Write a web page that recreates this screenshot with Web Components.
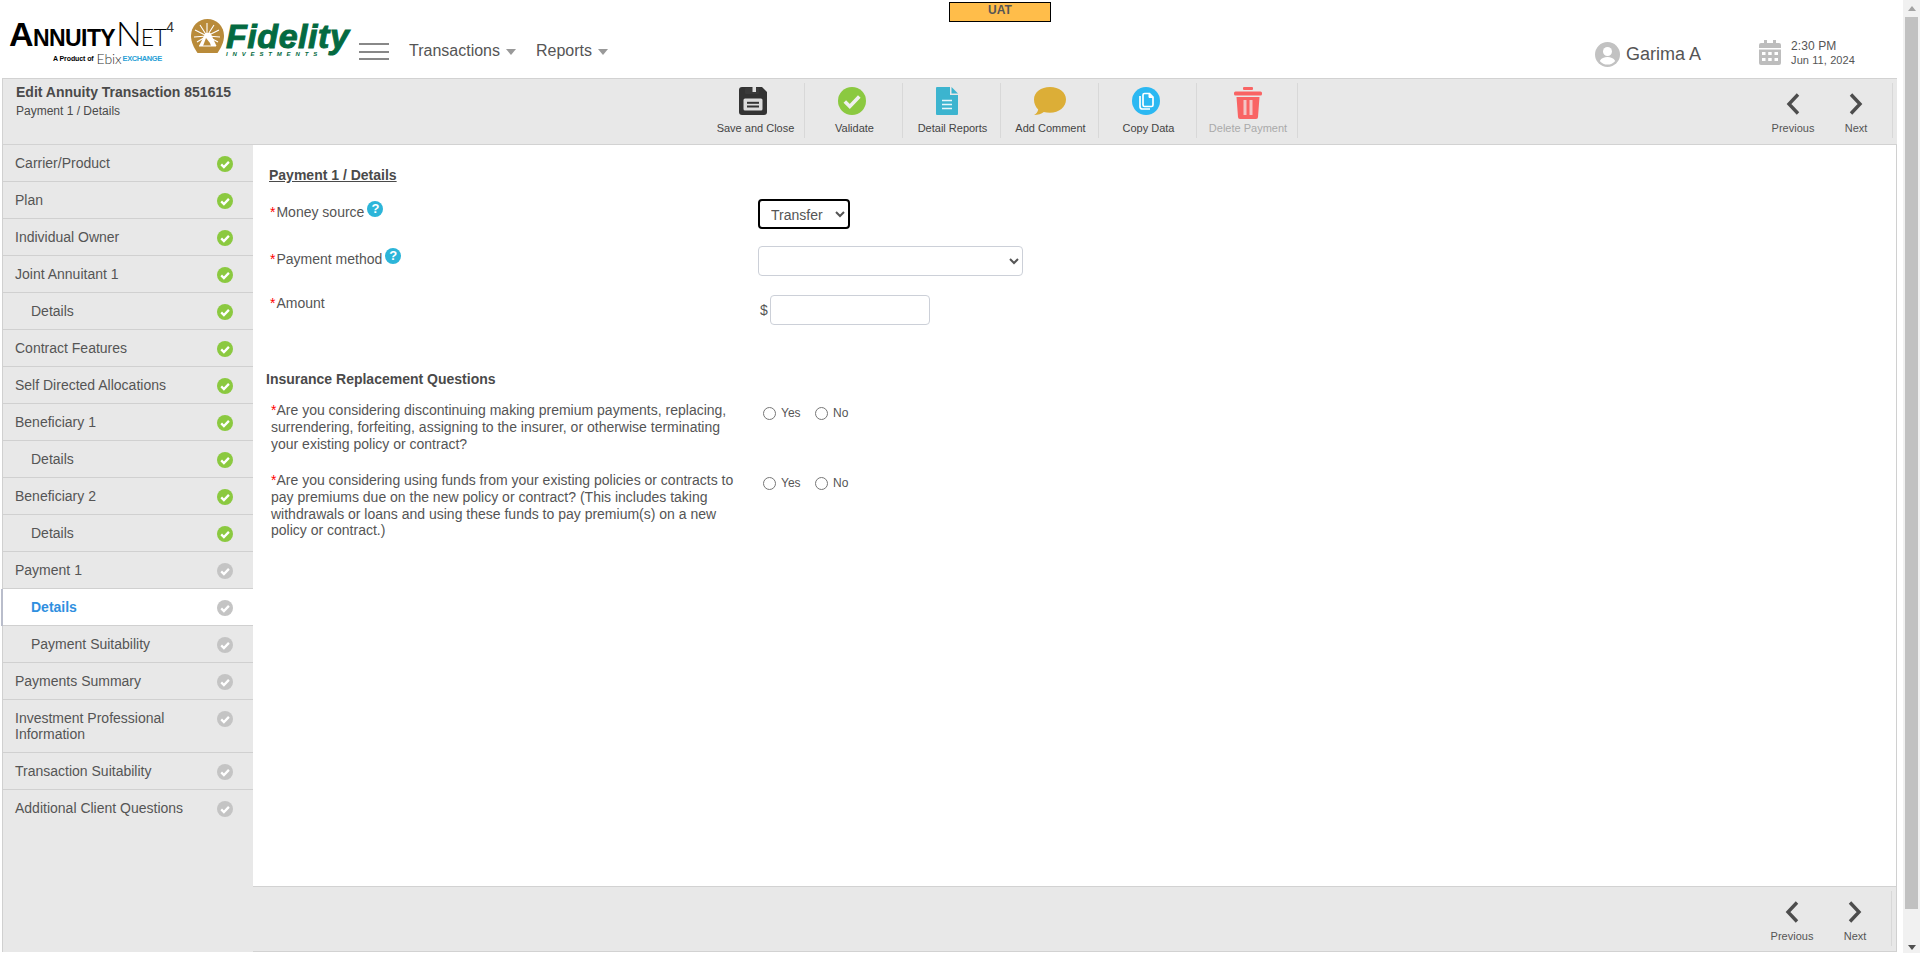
<!DOCTYPE html>
<html lang="en"><head><meta charset="utf-8"><title>Edit Annuity Transaction</title>
<style>
html,body{margin:0;padding:0;height:953px;overflow:hidden;background:#fff;font-family:"Liberation Sans",Arial,sans-serif;color:#555}
</style></head>
<body>
<an-app></an-app>
<script>
function def(name, html, extra){
  const t=document.createElement('template');t.innerHTML=html;
  customElements.define(name,class extends HTMLElement{
    constructor(){super();this.attachShadow({mode:'open'}).appendChild(t.content.cloneNode(true));}
    connectedCallback(){if(extra)extra(this);}
  });
}
const CHK='<path d="M4.2 8.4l2.7 2.7 5-5.2" fill="none" stroke="#fff" stroke-width="2.3"/>';

def('an-annuity-logo',`<style>
:host{display:flex;flex-direction:column;width:163px;height:46px;color:#000;font-family:"Liberation Sans",Arial,sans-serif;white-space:nowrap}
.top{display:flex;align-items:baseline;height:27px;line-height:27px}
.a{font:700 34px/27px "Liberation Sans";letter-spacing:-.5px}
.n{font:700 23px/27px "Liberation Sans";letter-spacing:-.6px}
.t{font:300 34px/27px Lato,"Liberation Sans";margin-left:1px;letter-spacing:-1px}
.e{font:300 23px/27px Lato,"Liberation Sans";letter-spacing:-.6px}
.f{font:400 14px/27px "Liberation Sans";align-self:flex-start;color:#333;margin:-5px 0 0 0}
.sub{display:flex;align-items:center;margin:9px 0 0 44px;height:8px;font:700 7px/8px "Liberation Sans";letter-spacing:-.1px}
.eb{font:300 14px/8px Lato,"Liberation Sans";color:#333;margin:0 1px 0 3px}
.x{color:#2a9fd6;font-size:7.5px;letter-spacing:-.4px}
</style><div class="top"><span class="a">A</span><span class="n">NNUITY</span><span class="t">N</span><span class="e">ET</span><span class="f">4</span></div>
<div class="sub"><span>A Product of</span><span class="eb">Ebix</span><span class="x">EXCHANGE</span></div>`);

def('an-fidelity-logo',`<style>
:host{display:flex;width:159px;height:36px;white-space:nowrap}
.w{display:flex;flex-direction:column;margin-left:2px;color:#046a41}
.f{font:italic 700 34px/28px "Liberation Sans";-webkit-text-stroke:1px #046a41;letter-spacing:.55px;height:28px;margin-top:3px}
.i{font:italic 700 6px/6px "Liberation Sans";letter-spacing:4.85px;margin-top:1px}
svg{flex:none}
</style><svg width="33" height="34" viewBox="0 0 33 34"><path d="M0 16.5a16.5 16.5 0 0 1 33 0c0 7-3 12-6.5 17.5H6.500C3 28.500 0 23.500 0 16.500Z" fill="#b98b3a"/>
<g stroke="#fff" stroke-width="1.100"><path d="M16 17 L16 4M16 17 L9 6M16 17 L23 6M16 17 L4 11M16 17 L28 11M16 17 L3 18M16 17 L29 18M16 17L6 23M16 17L27 23"/></g>
<path d="M14.500 14l5 0 6 13H8Z" fill="#fff"/><path d="M15 19l-3 8h8l-1-3Z" fill="#b98b3a"/><path d="M8 27h17" stroke="#fff" stroke-width="1"/></svg>
<div class="w"><div class="f">Fidelity</div><div class="i">INVESTMENTS</div></div>`);

def('an-hamburger',`<style>:host{display:flex;flex-direction:column;gap:5.400px;width:30px}i{display:block;height:2.200px;background:#888}</style><i></i><i></i><i></i>`);

def('an-menu',`<style>:host{display:inline-flex;align-items:center;font:16px/20px "Liberation Sans";color:#555}
i{display:block;width:0;height:0;border:5.500px solid transparent;border-top:6px solid #999;border-bottom:0;margin:2px 0 0 6px}</style><slot></slot><i></i>`);

def('an-uat',`<style>:host{display:block;box-sizing:border-box;width:102px;height:20px;background:#ffbd4a;border:1px solid #000;text-align:center;font:700 12px/14px "Liberation Sans";color:#555}</style><slot></slot>`);

def('an-user',`<style>:host{display:flex;align-items:center;gap:6px;font:18px/25px "Liberation Sans";color:#555;white-space:nowrap}svg{display:block}</style>
<svg width="25" height="25" viewBox="0 0 25 25"><circle cx="12.500" cy="12.500" r="12.500" fill="#c2c2c2"/><circle cx="12.500" cy="9.500" r="4.500" fill="#fff"/><path d="M4.800 19c1.500-3 4.500-4 7.700-4s6.200 1 7.700 4a10 10 0 0 1-15.400 0Z" fill="#fff"/></svg><slot></slot>`);

def('an-clock',`<style>:host{display:flex;gap:10px;color:#555}svg{display:block}
.c{display:flex;flex-direction:column;margin-top:-1px}.a{font:12px/15px "Liberation Sans";letter-spacing:.1px}.b{font:11px/13px "Liberation Sans";letter-spacing:.1px}</style>
<svg width="22" height="25" viewBox="0 0 22 25"><path d="M2 3h3V0h3v3h6V0h3v3h3a2 2 0 0 1 2 2v3H0V5a2 2 0 0 1 2-2Z" fill="#bdbdbd"/><path d="M0 9.500h22V23a2 2 0 0 1-2 2H2a2 2 0 0 1-2-2Z" fill="#bdbdbd"/>
<g fill="#fff"><rect x="3" y="12" width="3.500" height="3"/><rect x="9.200" y="12" width="3.500" height="3"/><rect x="15.500" y="12" width="3.500" height="3"/><rect x="3" y="18" width="3.500" height="3"/><rect x="9.200" y="18" width="3.500" height="3"/><rect x="15.500" y="18" width="3.500" height="3"/></g></svg>
<div class="c"><span class="a">2:30 PM</span><span class="b">Jun 11, 2024</span></div>`);

def('an-header',`<style>
:host{display:flex;align-items:flex-start;height:78px;flex:none}
an-annuity-logo{margin:19px 1px 0 9px}
an-fidelity-logo{margin:19px 0 0 18px}
an-hamburger{margin:43px 0 0 9px}
nav{display:flex;gap:20px;margin:41px 0 0 20px;width:199px;white-space:nowrap}
an-uat{margin:2px 0 0 341px}
an-user{margin:42px 0 0 544px}
an-clock{margin:40px 0 0 0}
.sp{width:58px;flex:none;margin:0}
</style>
<an-annuity-logo></an-annuity-logo><an-fidelity-logo></an-fidelity-logo><an-hamburger></an-hamburger>
<nav><an-menu>Transactions</an-menu><an-menu>Reports</an-menu></nav>
<an-uat>UAT</an-uat><an-user>Garima A</an-user><span class="sp"></span><an-clock></an-clock>`);

def('an-tool',`<style>
:host{display:flex;flex-direction:column;align-items:center;box-sizing:border-box;width:98px;height:55px;padding-top:4px;font:11px/14px "Liberation Sans";color:#444;white-space:nowrap;flex:none}
:host([sep]){border-right:1px solid #d8d8d8}
:host([off]){color:#aaa}
:host([nav]){width:63px;color:#555}
.i{height:32px;margin-bottom:2px;display:flex;justify-content:center}
</style><div class="i"><slot name="icon"></slot></div><slot></slot>`);

def('an-prev-next',`<style>:host{display:flex;margin-left:auto;align-self:flex-start;margin-top:4px}
.e{width:4.500px;border-right:1px solid #d8d8d8;height:55px}.r{width:4px}
svg{display:block;margin-top:6px}</style>
<an-tool nav><svg slot="icon" width="14" height="22" viewBox="0 0 14 22"><path d="M12 1.500 3 11l9 9.500" fill="none" stroke="#4d4d4d" stroke-width="3.400"/></svg>Previous</an-tool>
<an-tool nav><svg slot="icon" width="14" height="22" viewBox="0 0 14 22"><path d="M2 1.500 11 11l-9 9.500" fill="none" stroke="#4d4d4d" stroke-width="3.400"/></svg>Next</an-tool>
<div class="e"></div><div class="r"></div>`);

def('an-toolbar',`<style>
:host{display:flex;box-sizing:border-box;height:67px;flex:none;background:#e8e8e8;border:1px solid #d2d2d2;border-width:1px 0 1px 1px}
.t{width:704px;flex:none;box-sizing:border-box;padding:5px 0 0 13px;color:#4a4a4a}
.h{font:700 14px/17px "Liberation Sans"}
.s{font:12px/15px "Liberation Sans";margin-top:3px}
.b{display:flex;margin-top:4px}
.m{padding-left:2px}
</style>
<div class="t"><div class="h">Edit Annuity Transaction 851615</div><div class="s">Payment 1 / Details</div></div>
<div class="b">
<an-tool sep><svg slot="icon" style="margin-right:5px" width="28" height="28" viewBox="0 0 28 28"><path d="M3 0h20l5 5v20a3 3 0 0 1-3 3H3a3 3 0 0 1-3-3V3a3 3 0 0 1 3-3Z" fill="#333"/><rect x="6" y="1" width="14" height="6" rx="1" fill="#3a3a3a"/><rect x="13.500" y="0" width="3.500" height="5" fill="#e0e0e0"/><rect x="4.500" y="11.500" width="19" height="12" rx="1.500" fill="#dcdcdc"/><rect x="8" y="14.800" width="12" height="2" fill="#333"/><rect x="8" y="18.500" width="12" height="2" fill="#333"/></svg>Save and Close</an-tool>
<an-tool class="m" sep><svg slot="icon" style="margin-right:5px" width="28" height="28" viewBox="0 0 28 28"><circle cx="14" cy="14" r="14" fill="#8bc940"/><path d="M6.800 14.500l5 5 9.500-10" fill="none" stroke="#f0f0f0" stroke-width="3.600"/></svg>Validate</an-tool>
<an-tool class="m" sep><svg slot="icon" style="margin-right:11px" width="22" height="28" viewBox="0 0 22 28"><path d="M1 0h13v8h8v19a1 1 0 0 1-1 1H1a1 1 0 0 1-1-1V1a1 1 0 0 1 1-1Z" fill="#3cb4cf"/><path d="M15.500 0 22 6.500h-6.500Z" fill="#3cb4cf"/><path d="M6 13.500h10M6 17.500h10M6 21.500h10" stroke="#e8f6fa" stroke-width="1.500"/></svg>Detail Reports</an-tool>
<an-tool class="m" sep><svg slot="icon" style="margin-right:1px" width="32" height="28" viewBox="0 0 32 28"><path d="M16 0c9 0 16 5.200 16 12.500S25 25.800 16 25.800c-2.200 0-4.300-.3-6.200-.8C7.500 26.800 4 28 0 28c2.300-1.300 3.700-3.300 4.200-5.600C1.600 20 0 16.500 0 12.500 0 5.200 7 0 16 0Z" fill="#dcae37"/></svg>Add Comment</an-tool>
<an-tool class="m" sep><svg slot="icon" style="margin-right:5px" width="28" height="28" viewBox="0 0 28 28"><circle cx="14" cy="14" r="14" fill="#2bb8f2"/><path d="M12.500 6.500h5l3.500 3.500v8a1.500 1.500 0 0 1-1.500 1.500h-7A1.500 1.500 0 0 1 11 18V8a1.500 1.500 0 0 1 1.500-1.500Z" fill="none" stroke="#fff" stroke-width="1.700"/><path d="M17 6.500V10.500H21" fill="#fff" stroke="#fff" stroke-width="1"/><path d="M8 9v10.500A2.500 2.500 0 0 0 10.500 22H18" fill="none" stroke="#fff" stroke-width="1.700"/></svg>Copy Data</an-tool>
<an-tool class="m" sep off style="width:101px"><svg slot="icon" style="margin-right:1px" width="28" height="32" viewBox="0 0 28 32"><rect x="9" y="0" width="10" height="3" rx="1" fill="#f96464"/><rect x="0" y="4.500" width="28" height="4" rx="1.500" fill="#f96464"/><path d="M2.500 10h23l-1.500 20a2 2 0 0 1-2 2H6a2 2 0 0 1-2-2Z" fill="#f96464"/><rect x="9.500" y="13" width="3" height="15" fill="#f3c6c6"/><rect x="15.500" y="13" width="3" height="15" fill="#f3c6c6"/></svg>Delete Payment</an-tool>
</div>
<an-prev-next></an-prev-next>`);

def('an-status',`<style>:host{display:block;width:16px;height:16px;flex:none}svg{display:block}</style>
<svg width="16" height="16" viewBox="0 0 16 16"><circle cx="8" cy="8" r="8" fill="var(--c,#8bc940)"/>${CHK}</svg>`);

def('an-side-row',`<style>
:host{display:flex;justify-content:space-between;box-sizing:border-box;padding:10px 20px 10px 12px;border-bottom:1px solid #d0d0d0;font:14px/16px "Liberation Sans";color:#555;flex:none}
:host(:last-child){border-bottom:0}
:host([sub]){padding-left:28px}
:host([pending]) an-status{--c:#c4c4c4}
:host([active]){background:#fff;color:#2f8fdf;font-weight:700;box-shadow:-2px 0 0 #b9bdcb}
.t{width:176px}
an-status{margin:1px 0 -1px}
</style><div class="t"><slot></slot></div><an-status></an-status>`);

def('an-sidebar',`<style>:host{display:flex;flex-direction:column;width:251px;box-sizing:border-box;background:#e8e8e8;border-left:1px solid #d0d0d0;flex:none}</style><slot></slot>`);

def('an-help',`<style>:host{display:inline-block;box-sizing:border-box;width:16px;height:16px;border-radius:50%;background:#2cb5d9;color:#fff;font:700 13px/16px "Liberation Sans";text-align:center;vertical-align:top;margin:-3px 0 0 3px}</style>?`);

def('an-field',`<style>
:host{display:grid;grid-template-columns:488px auto;align-items:start}
.l{padding-top:5px;font:14px/17px "Liberation Sans";color:#555}
b{color:#f00;font-weight:400;margin-right:1px}
</style><div class="l"><b>*</b><slot name="label"></slot></div><div><slot></slot></div>`);

def('an-question',`<style>
:host{display:grid;grid-template-columns:488px auto;align-items:start;margin-left:1px}
.q{font:14px/16.800px "Liberation Sans";color:#555;width:475px}
b{color:#f00;font-weight:400}
.r{display:flex;align-items:center;font:12px/14px "Liberation Sans";padding:4px 0 0 4px}
input{margin:0 5px 0 0;width:13px;height:13px}
span{margin-right:14px;width:20px}
</style><div class="q"><b>*</b><slot></slot></div>
<div class="r"><input type="radio" name="q"><span>Yes</span><input type="radio" name="q"><span>No</span></div>`);

def('an-form',`<style>
:host{display:block;flex:1;box-sizing:border-box;padding:22px 0 0 17px;background:#fff;color:#555}
h2{font:700 14px/17px "Liberation Sans";text-decoration:underline;margin:0 0 15px -1px;color:#4a4a4a;padding-top:0}
h3{font:700 14px/17px "Liberation Sans";margin:46px 0 14px -4px;color:#4a4a4a}
select{display:block;box-sizing:border-box;height:30px;background:#fff;border:1px solid #ccd0d8;border-radius:4px;font:14px "Liberation Sans";color:#555;padding:1px 7px 0;margin:0}
.focus{width:92px;border:2px solid #000;outline:0;padding:1px 7px 0;border-radius:4px}
.wide{width:265px}
.amt{display:flex;align-items:center;margin:5px 0 0 1px;font:14px/17px "Liberation Sans"}
.amt input{box-sizing:border-box;width:160px;height:30px;border:1px solid #ccd0d8;border-radius:4px;margin-left:2px;padding:0;background:#fff}
.amt span{margin-left:1px;width:8px}
.r1{height:47px}.r2{height:44px}.r3{height:35px}
.q1{height:70px}
</style>
<h2>Payment 1 / Details</h2>
<an-field class="r1"><span slot="label">Money source<an-help></an-help></span><select class="focus"><option>Transfer</option></select></an-field>
<an-field class="r2"><span slot="label">Payment method<an-help></an-help></span><select class="wide"><option></option></select></an-field>
<an-field class="r3"><span slot="label">Amount</span><div class="amt"><span>$</span><input type="text"></div></an-field>
<h3>Insurance Replacement Questions</h3>
<an-question class="q1">Are you considering discontinuing making premium payments, replacing, surrendering, forfeiting, assigning to the insurer, or otherwise terminating your existing policy or contract?</an-question>
<an-question>Are you considering using funds from your existing policies or contracts to pay premiums due on the new policy or contract? (This includes taking withdrawals or loans and using these funds to pay premium(s) on a new policy or contract.)</an-question>`);

def('an-footer',`<style>:host{display:flex;box-sizing:border-box;height:66px;flex:none;background:#e8e8e8;border-top:1px solid #d2d2d2;border-bottom:1px solid #d2d2d2}</style><an-prev-next></an-prev-next>`);

def('an-scrollbar',`<style>
:host{display:flex;flex-direction:column;align-items:center;width:17px;height:953px;background:#f1f1f1;flex:none}
.u,.d{height:17px;display:flex;align-items:center;justify-content:center;flex:none}
.u i,.d i{display:block;width:0;height:0;border:4.500px solid transparent}
.u i{border-top:0;border-bottom:5px solid #a3a3a3}
.d i{border-bottom:0;border-top:5px solid #505050;margin-top:6px}
.t{width:13px;height:892px;background:#c1c1c1;flex:none}
.s{flex:1}
</style><div class="u"><i></i></div><div class="t"></div><div class="s"></div><div class="d"><i></i></div>`);

def('an-app',`<style>
:host{display:flex;width:1920px;height:953px;overflow:hidden}
.page{flex:1;display:flex;flex-direction:column;min-width:0}
.work{flex:1;display:flex;flex-direction:column;margin:0 6px 1px 2px;min-height:0}
.body{flex:1;display:flex;min-height:0}
.content{flex:1;display:flex;flex-direction:column;border-right:1px solid #d0d0d0;min-width:0}
</style>
<div class="page"><an-header></an-header>
<div class="work"><an-toolbar></an-toolbar>
<div class="body">
<an-sidebar>
<an-side-row>Carrier/Product</an-side-row>
<an-side-row>Plan</an-side-row>
<an-side-row>Individual Owner</an-side-row>
<an-side-row>Joint Annuitant 1</an-side-row>
<an-side-row sub>Details</an-side-row>
<an-side-row>Contract Features</an-side-row>
<an-side-row>Self Directed Allocations</an-side-row>
<an-side-row>Beneficiary 1</an-side-row>
<an-side-row sub>Details</an-side-row>
<an-side-row>Beneficiary 2</an-side-row>
<an-side-row sub>Details</an-side-row>
<an-side-row pending>Payment 1</an-side-row>
<an-side-row pending sub active>Details</an-side-row>
<an-side-row pending sub>Payment Suitability</an-side-row>
<an-side-row pending>Payments Summary</an-side-row>
<an-side-row pending>Investment Professional Information</an-side-row>
<an-side-row pending>Transaction Suitability</an-side-row>
<an-side-row pending>Additional Client Questions</an-side-row>
</an-sidebar>
<div class="content"><an-form></an-form><an-footer></an-footer></div>
</div></div></div>
<an-scrollbar></an-scrollbar>`);
</script>
</body></html>
